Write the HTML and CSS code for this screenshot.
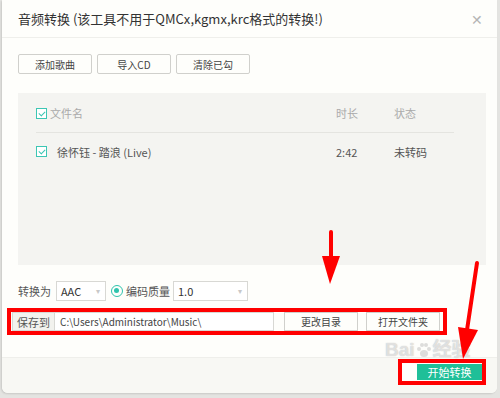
FILE: index.html
```html
<!DOCTYPE html>
<html>
	<head>
		<meta charset="utf-8">
		<title>音频转换</title>
		<link rel="stylesheet" href="styles.css">
	</head>
	<body>
		<div id="dialog">
			<div class="title-bar">
				<span class="title">音频转换 (该工具不用于QMCx,kgmx,krc格式的转换!)</span>
				<span class="close">&#x2715;</span>
			</div>

			<div class="toolbar">
				<a href="javascript:;" class="btn">添加歌曲</a>
				<a href="javascript:;" class="btn">导入CD</a>
				<a href="javascript:;" class="btn">清除已勾</a>
			</div>

			<div class="song-list">
				<div class="list-head">
					<span class="col-name"><i class="check"></i>文件名</span>
					<span class="col-time">时长</span>
					<span class="col-state">状态</span>
				</div>
				<div class="list-row">
					<span class="col-name"><i class="check"></i><b>徐怀钰 - 踏浪 (Live)</b></span>
					<span class="col-time">2:42</span>
					<span class="col-state">未转码</span>
				</div>
			</div>

			<div class="convert-row">
				<span class="label">转换为</span>
				<span class="select fmt">AAC<i class="caret">&#9662;</i></span>
				<i class="radio"></i>
				<span class="label">编码质量</span>
				<span class="select quality">1.0<i class="caret">&#9662;</i></span>
			</div>

			<div class="save-row">
				<span class="save-label">保存到</span>
				<span class="save-path">C:\Users\Administrator\Music\</span>
				<a href="javascript:;" class="btn small">更改目录</a>
				<a href="javascript:;" class="btn small wide">打开文件夹</a>
			</div>

			<div class="footer">
				<div class="start-box">
					<a href="javascript:;" class="start">开始转换</a>
				</div>
			</div>

			<div class="watermark">
				<span class="wm-big">Bai<svg class="paw" width="16" height="16" viewBox="0 0 16 16">
					<circle cx="3" cy="7" r="2" />
					<circle cx="6" cy="3" r="2" />
					<circle cx="10" cy="3" r="2" />
					<circle cx="13" cy="7" r="2" />
					<ellipse cx="8" cy="11.5" rx="4" ry="3.5" />
				</svg>经验</span>
			</div>

			<svg class="arrows" width="500" height="398" viewBox="0 0 500 398">
				<line x1="331" y1="232" x2="331" y2="258" stroke="#f00" stroke-width="4" stroke-linecap="round"/>
				<polygon points="322,256 340,256 330,284" fill="#f00"/>
				<line x1="477" y1="263" x2="467" y2="330" stroke="#f00" stroke-width="4" stroke-linecap="round"/>
				<polygon points="458,327 478,330 463,359" fill="#f00"/>
			</svg>
		</div>
	</body>
</html>
```

FILE: styles.css
```css
* {
	margin: 0;
	padding: 0;
	text-decoration: none;
	box-sizing: border-box;
}
body {
	background-color: #e4e4e1;
	font-family: "Noto Sans CJK SC", "Noto Sans", sans-serif;
	font-size: 11px;
	color: #444;
	width: 500px;
	height: 398px;
	overflow: hidden;
}
#dialog {
	position: relative;
	width: 495px;
	height: 393px;
	margin-left: 2px;
	background-color: #fefefb;
	border-radius: 0 0 6px 6px;
	box-shadow: -1px 1px 2px rgba(0,0,0,.12);
	overflow: hidden;
}
.title-bar {
	height: 38px;
	display: flex;
	align-items: center;
	justify-content: space-between;
	padding: 0 14px 0 16px;
	border-bottom: 1px solid #efefeb;
}
.title {
	font-size: 13px;
	color: #333;
}
.close {
	font-size: 14px;
	color: #b5b5b5;
}
.toolbar {
	display: flex;
	gap: 5px;
	padding: 16px 0 0 16px;
}
.btn {
	display: flex;
	align-items: center;
	justify-content: center;
	width: 74px;
	height: 20px;
	border: 1px solid #d0d0cc;
	border-radius: 2px;
	background: #fefefb;
	color: #444;
	font-size: 10px;
}
.song-list {
	margin: 19px 11px 0 16px;
	height: 172px;
	background-color: #f4f4f1;
	padding: 0 32px 0 18px;
}
.list-head, .list-row {
	display: flex;
	align-items: center;
}
.list-head {
	height: 40px;
	padding-top: 1px;
	border-bottom: 1px solid #e4e4e0;
	color: #aaa;
}
.list-row {
	height: 37px;
	color: #555;
}
.col-name {
	flex: 1;
	display: flex;
	align-items: center;
}
.col-name b {
	font-weight: normal;
	margin-left: 7px;
}
.col-time {
	width: 58px;
}
.col-state {
	width: 60px;
}
.check {
	width: 11px;
	height: 11px;
	border: 1px solid #3cc6b4;
	background: #fff;
	margin-right: 3px;
	position: relative;
}
.check::after {
	content: "";
	position: absolute;
	left: 3px;
	top: 1px;
	width: 3px;
	height: 5px;
	border: solid #3cc6b4;
	border-width: 0 1.5px 1.5px 0;
	transform: rotate(45deg);
}
.convert-row {
	display: flex;
	align-items: center;
	margin: 16px 0 0 16px;
	height: 20px;
}
.label {
	color: #555;
}
.select {
	position: relative;
	display: flex;
	align-items: center;
	height: 20px;
	border: 1px solid #d8d8d4;
	background: #fff;
	padding-left: 4px;
	color: #333;
}
.fmt {
	width: 50px;
	margin: 0 5px 0 5px;
}
.quality {
	width: 75px;
	margin-left: 3px;
}
.caret {
	position: absolute;
	right: 5px;
	top: 3px;
	font-style: normal;
	font-size: 8px;
	color: #c8c8c8;
}
.radio {
	width: 12px;
	height: 12px;
	border: 1.5px solid #2fc4ad;
	border-radius: 50%;
	margin-right: 3px;
	position: relative;
}
.radio::after {
	content: "";
	position: absolute;
	left: 2px;
	top: 2px;
	width: 5px;
	height: 5px;
	border-radius: 50%;
	background: #2fc4ad;
}
.save-row {
	display: flex;
	align-items: center;
	margin: 7px 0 0 5px;
	width: 440px;
	height: 27px;
	border: 4px solid #f00;
	background: #fefefb;
}
.save-label {
	display: flex;
	align-items: center;
	justify-content: center;
	width: 43px;
	height: 19px;
	margin-left: 1px;
	background: #f2f2ee;
	border: 1px solid #d8d8d4;
	color: #555;
}
.save-path {
	display: flex;
	align-items: center;
	width: 219px;
	height: 19px;
	padding-left: 5px;
	border: 1px solid #d8d8d4;
	border-left: none;
	background: #fff;
	color: #444;
	font-size: 10px;
}
.btn.small {
	height: 19px;
	width: 74px;
	margin-left: 10px;
	border-radius: 0;
}
.btn.wide {
	margin-left: 8px;
	width: 74px;
}
.footer {
	margin-top: 22px;
	height: 36px;
	border-top: 1px solid #efefeb;
	background: #f8f8f4;
	display: flex;
	justify-content: flex-end;
	padding: 1px 11px 0 0;
}
.start-box {
	width: 88px;
	height: 26px;
	border: 4px solid #f00;
	background: #fefefb;
	display: flex;
	justify-content: flex-end;
	align-items: center;
}
.start {
	width: 65px;
	height: 16px;
	background: #1fbf98;
	color: #fff;
	display: flex;
	align-items: center;
	justify-content: center;
	font-size: 11px;
}
.watermark {
	position: absolute;
	left: 383px;
	top: 339px;
	color: rgba(255,255,255,.6);
	text-shadow: 0 0 1px rgba(110,110,110,.55);
	pointer-events: none;
}
.wm-big {
	display: flex;
	align-items: center;
	font-family: "Liberation Sans", "Noto Sans CJK SC", sans-serif;
	font-size: 19px;
	font-weight: bold;
	line-height: 22px;
}
.paw {
	fill: rgba(160,160,160,.35);
	margin: 0 1px;
}
.arrows {
	position: absolute;
	left: -2px;
	top: 0;
	pointer-events: none;
}
```
